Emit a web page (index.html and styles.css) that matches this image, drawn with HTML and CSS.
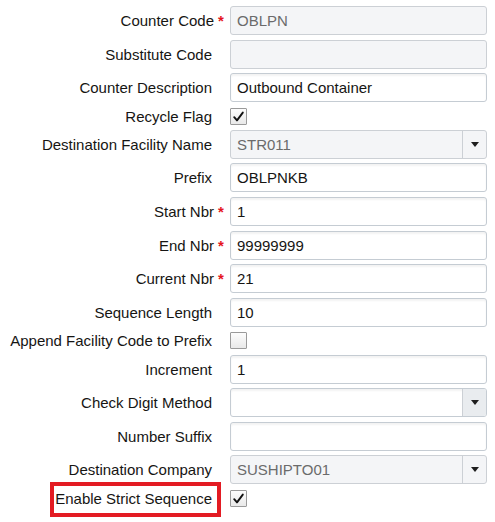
FILE: index.html
```html
<!DOCTYPE html>
<html>
<head>
<meta charset="utf-8">
<link rel="stylesheet" href="styles.css">
</head>
<body>
<div class="form">
  <div class="label req">Counter Code<span class="ast">*</span></div>
  <div class="field ro">OBLPN</div>

  <div class="label">Substitute Code</div>
  <div class="field ro"></div>

  <div class="label">Counter Description</div>
  <div class="field">Outbound Container</div>

  <div class="label">Recycle Flag</div>
  <div class="cbcell"><span class="cb"><svg class="tick" viewBox="0 0 15 15"><path d="M3.2 8.2 L6 11.4 L11.8 3.6"/></svg></span></div>

  <div class="label">Destination Facility Name</div>
  <div class="field ro select"><span class="val">STR011</span><span class="btn"><span class="arrow"></span></span></div>

  <div class="label">Prefix</div>
  <div class="field">OBLPNKB</div>

  <div class="label req">Start Nbr<span class="ast">*</span></div>
  <div class="field">1</div>

  <div class="label req">End Nbr<span class="ast">*</span></div>
  <div class="field">99999999</div>

  <div class="label req">Current Nbr<span class="ast">*</span></div>
  <div class="field">21</div>

  <div class="label">Sequence Length</div>
  <div class="field">10</div>

  <div class="label">Append Facility Code to Prefix</div>
  <div class="cbcell"><span class="cb"></span></div>

  <div class="label">Increment</div>
  <div class="field">1</div>

  <div class="label">Check Digit Method</div>
  <div class="field select"><span class="val"></span><span class="btn shaded"><span class="arrow"></span></span></div>

  <div class="label">Number Suffix</div>
  <div class="field"></div>

  <div class="label">Destination Company</div>
  <div class="field ro select"><span class="val">SUSHIPTO01</span><span class="btn"><span class="arrow"></span></span></div>

  <div class="label"><span class="mark">Enable Strict Sequence</span></div>
  <div class="cbcell"><span class="cb"><svg class="tick" viewBox="0 0 15 15"><path d="M3.2 8.2 L6 11.4 L11.8 3.6"/></svg></span></div>
</div>
</body>
</html>
```
FILE: styles.css
```css
html, body {
  margin: 0;
  padding: 0;
  background: #ffffff;
}
body {
  font-family: "Liberation Sans", Arial, sans-serif;
  font-size: 15px;
  color: #161513;
  min-height: 522px;
}
.form {
  display: grid;
  grid-template-columns: 230px 257px;
  grid-template-rows: 29px 29px 29px 18.5px 29px 29px 29px 29px 29px 29px 18.5px 29px 29px 29px 29px 18.5px;
  row-gap: 4.6px;
  padding-top: 6px;
  padding-bottom: 16px;
}
.label {
  display: flex;
  align-items: center;
  justify-content: flex-end;
  padding-right: 18px;
  white-space: nowrap;
  line-height: 1;
}
.label.req {
  padding-right: 6px;
}
.ast {
  color: #e5161e;
  margin-left: 4px;
  width: 6px;
  font-size: 15px;
  font-weight: bold;
  position: relative;
  top: 0;
}
.cbcell {
  display: flex;
  align-items: center;
}
.cb {
  box-sizing: border-box;
  width: 17px;
  height: 17px;
  border: 1px solid #9a9a9a;
  border-radius: 1px;
  background: linear-gradient(#fdfdfd, #e9e9e9);
  display: flex;
  align-items: center;
  justify-content: center;
}
.tick {
  width: 15px;
  height: 15px;
  fill: none;
  stroke: #111;
  stroke-width: 1.9;
  stroke-linecap: round;
  stroke-linejoin: round;
}
.field {
  box-sizing: border-box;
  height: 29px;
  border: 1px solid #c5ccd3;
  border-radius: 3px;
  background: #ffffff;
  box-shadow: inset 0 2px 2px rgba(0,0,0,0.05);
  padding: 0 6px;
  display: flex;
  align-items: center;
  color: #161513;
  overflow: hidden;
}
.field.ro {
  background: #f4f5f7;
  border-color: #ccd0d5;
  box-shadow: none;
  color: #6b6b6b;
}
.field.select {
  padding-right: 0;
}
.val {
  flex: 1;
}
.btn {
  width: 23px;
  align-self: stretch;
  border-left: 1px solid #ccd0d5;
  display: flex;
  align-items: center;
  justify-content: center;
}
.btn.shaded {
  background: #e9ecef;
}
.arrow {
  width: 0;
  height: 0;
  border-left: 4px solid transparent;
  border-right: 4px solid transparent;
  border-top: 5px solid #1e1e1e;
  margin-left: 1px;
}
.mark {
  position: relative;
}
.mark::after {
  content: "";
  position: absolute;
  left: -5px;
  right: -9px;
  top: -9px;
  bottom: -11px;
  border: 4px solid #e31b23;
}
```
